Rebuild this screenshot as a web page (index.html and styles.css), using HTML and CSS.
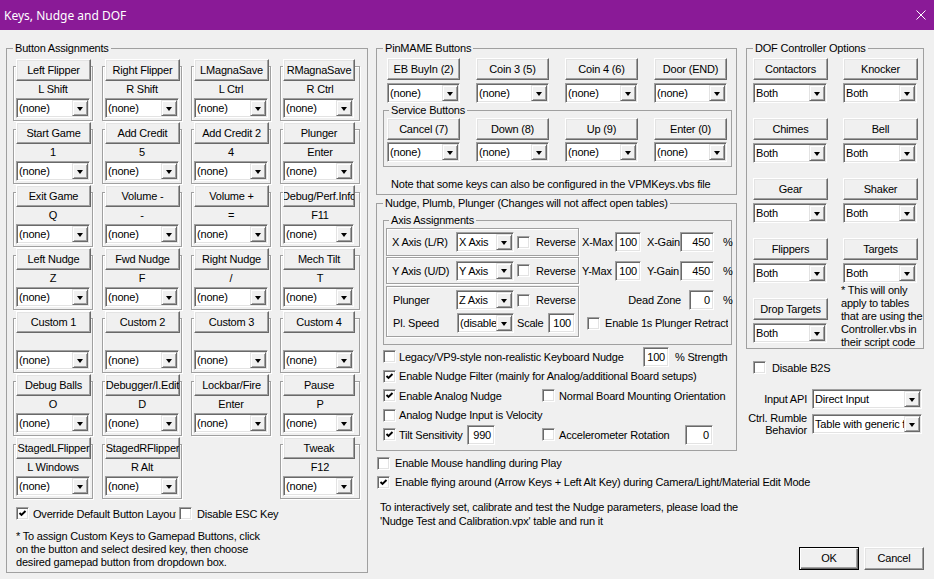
FILE: index.html
```html
<!DOCTYPE html>
<html lang="en">
<head>
    <meta charset="UTF-8">
    <meta name="viewport" content="width=device-width, initial-scale=1.0">
    <title>Keys, Nudge and DOF</title>
    <link rel="stylesheet" href="styles.css">
</head>
<body>
<div class="window">
    <div class="titlebar">
        <span class="title">Keys, Nudge and DOF</span>
        <svg class="close" width="10" height="10" viewBox="0 0 10 10"><path d="M0.5 0.5L9.5 9.5M9.5 0.5L0.5 9.5" stroke="#fff" stroke-width="1" fill="none"/></svg>
    </div>

    <div class="content">
        <!-- left: key assignments -->
        <div class="col">
            <fieldset class="group keys">
                <legend>Button Assignments</legend>
                <div class="key-grid">
                    <div class="key"><button class="btn">Left Flipper</button><div class="key-name">L Shift</div><div class="combo"><span class="val">(none)</span><span class="arr"></span></div></div>
                    <div class="key"><button class="btn">Right Flipper</button><div class="key-name">R Shift</div><div class="combo"><span class="val">(none)</span><span class="arr"></span></div></div>
                    <div class="key"><button class="btn">LMagnaSave</button><div class="key-name">L Ctrl</div><div class="combo"><span class="val">(none)</span><span class="arr"></span></div></div>
                    <div class="key k4"><button class="btn">RMagnaSave</button><div class="key-name">R Ctrl</div><div class="combo"><span class="val">(none)</span><span class="arr"></span></div></div>

                    <div class="key"><button class="btn">Start Game</button><div class="key-name">1</div><div class="combo"><span class="val">(none)</span><span class="arr"></span></div></div>
                    <div class="key"><button class="btn">Add Credit</button><div class="key-name">5</div><div class="combo"><span class="val">(none)</span><span class="arr"></span></div></div>
                    <div class="key"><button class="btn">Add Credit 2</button><div class="key-name">4</div><div class="combo"><span class="val">(none)</span><span class="arr"></span></div></div>
                    <div class="key k4"><button class="btn">Plunger</button><div class="key-name">Enter</div><div class="combo"><span class="val">(none)</span><span class="arr"></span></div></div>

                    <div class="key"><button class="btn">Exit Game</button><div class="key-name">Q</div><div class="combo"><span class="val">(none)</span><span class="arr"></span></div></div>
                    <div class="key"><button class="btn">Volume -</button><div class="key-name">-</div><div class="combo"><span class="val">(none)</span><span class="arr"></span></div></div>
                    <div class="key"><button class="btn">Volume +</button><div class="key-name">=</div><div class="combo"><span class="val">(none)</span><span class="arr"></span></div></div>
                    <div class="key k4"><button class="btn">Debug/Perf.Info</button><div class="key-name">F11</div><div class="combo"><span class="val">(none)</span><span class="arr"></span></div></div>

                    <div class="key"><button class="btn">Left Nudge</button><div class="key-name">Z</div><div class="combo"><span class="val">(none)</span><span class="arr"></span></div></div>
                    <div class="key"><button class="btn">Fwd Nudge</button><div class="key-name">F</div><div class="combo"><span class="val">(none)</span><span class="arr"></span></div></div>
                    <div class="key"><button class="btn">Right Nudge</button><div class="key-name">/</div><div class="combo"><span class="val">(none)</span><span class="arr"></span></div></div>
                    <div class="key k4"><button class="btn">Mech Tilt</button><div class="key-name">T</div><div class="combo"><span class="val">(none)</span><span class="arr"></span></div></div>

                    <div class="key"><button class="btn">Custom 1</button><div class="key-name"></div><div class="combo"><span class="val">(none)</span><span class="arr"></span></div></div>
                    <div class="key"><button class="btn">Custom 2</button><div class="key-name"></div><div class="combo"><span class="val">(none)</span><span class="arr"></span></div></div>
                    <div class="key"><button class="btn">Custom 3</button><div class="key-name"></div><div class="combo"><span class="val">(none)</span><span class="arr"></span></div></div>
                    <div class="key k4"><button class="btn">Custom 4</button><div class="key-name"></div><div class="combo"><span class="val">(none)</span><span class="arr"></span></div></div>

                    <div class="key"><button class="btn">Debug Balls</button><div class="key-name">O</div><div class="combo"><span class="val">(none)</span><span class="arr"></span></div></div>
                    <div class="key"><button class="btn">Debugger/I.Edit</button><div class="key-name">D</div><div class="combo"><span class="val">(none)</span><span class="arr"></span></div></div>
                    <div class="key"><button class="btn">Lockbar/Fire</button><div class="key-name">Enter</div><div class="combo"><span class="val">(none)</span><span class="arr"></span></div></div>
                    <div class="key k4"><button class="btn">Pause</button><div class="key-name">P</div><div class="combo"><span class="val">(none)</span><span class="arr"></span></div></div>

                    <div class="key"><button class="btn">StagedLFlipper</button><div class="key-name">L Windows</div><div class="combo"><span class="val">(none)</span><span class="arr"></span></div></div>
                    <div class="key"><button class="btn">StagedRFlipper</button><div class="key-name">R Alt</div><div class="combo"><span class="val">(none)</span><span class="arr"></span></div></div>
                    <div class="key k4 tweak"><button class="btn">Tweak</button><div class="key-name">F12</div><div class="combo"><span class="val">(none)</span><span class="arr"></span></div></div>
                </div>

                <div class="key-opts">
                    <label class="chk override"><span class="cb on"><svg viewBox="0 0 9 9"><polyline points="1.5,4 3.5,6 7.5,2"/></svg></span><span class="txt">Override Default Button Layout</span></label>
                    <label class="chk esc"><span class="cb"></span><span class="txt">Disable ESC Key</span></label>
                </div>
                <p class="key-note">* To assign Custom Keys to Gamepad Buttons, click<br>on the button and select desired key, then choose<br>desired gamepad button from dropdown box.</p>
            </fieldset>
        </div>

        <!-- middle: pinmame + nudge -->
        <div class="col">
            <fieldset class="group pinmame">
                <legend>PinMAME Buttons</legend>
                <div class="pm-grid">
                    <div><button class="btn">EB BuyIn (2)</button><div class="combo"><span class="val">(none)</span><span class="arr"></span></div></div>
                    <div><button class="btn">Coin 3 (5)</button><div class="combo"><span class="val">(none)</span><span class="arr"></span></div></div>
                    <div><button class="btn">Coin 4 (6)</button><div class="combo"><span class="val">(none)</span><span class="arr"></span></div></div>
                    <div><button class="btn">Door (END)</button><div class="combo"><span class="val">(none)</span><span class="arr"></span></div></div>
                </div>
                <fieldset class="group service">
                    <legend>Service Buttons</legend>
                    <div class="pm-grid">
                        <div><button class="btn">Cancel (7)</button><div class="combo"><span class="val">(none)</span><span class="arr"></span></div></div>
                        <div><button class="btn">Down (8)</button><div class="combo"><span class="val">(none)</span><span class="arr"></span></div></div>
                        <div><button class="btn">Up (9)</button><div class="combo"><span class="val">(none)</span><span class="arr"></span></div></div>
                        <div><button class="btn">Enter (0)</button><div class="combo"><span class="val">(none)</span><span class="arr"></span></div></div>
                    </div>
                </fieldset>
                <p class="pm-note">Note that some keys can also be configured in the VPMKeys.vbs file</p>
            </fieldset>

            <fieldset class="group nudge">
                <legend>Nudge, Plumb, Plunger (Changes will not affect open tables)</legend>
                <fieldset class="group axis">
                    <legend>Axis Assignments</legend>
                    <div class="axis-row">
                        <div class="axis-box">
                            <span class="axis-label">X Axis (L/R)</span>
                            <div class="combo axis-combo"><span class="val">X Axis</span><span class="arr"></span></div>
                            <span class="cb"></span><span class="rev">Reverse</span>
                        </div>
                        <div class="axis-side">
                            <span class="max-label">X-Max</span><span class="field max-field">100</span>
                            <span class="gain-label">X-Gain</span><span class="field gain-field">450</span>
                            <span class="pct">%</span>
                        </div>
                    </div>
                    <div class="axis-row axis-y">
                        <div class="axis-box">
                            <span class="axis-label">Y Axis (U/D)</span>
                            <div class="combo axis-combo"><span class="val">Y Axis</span><span class="arr"></span></div>
                            <span class="cb"></span><span class="rev">Reverse</span>
                        </div>
                        <div class="axis-side">
                            <span class="max-label">Y-Max</span><span class="field max-field">100</span>
                            <span class="gain-label">Y-Gain</span><span class="field gain-field">450</span>
                            <span class="pct">%</span>
                        </div>
                    </div>
                    <div class="axis-row plunger">
                        <div class="axis-box">
                            <div class="line">
                                <span class="axis-label">Plunger</span>
                                <div class="combo axis-combo"><span class="val">Z Axis</span><span class="arr"></span></div>
                                <span class="cb"></span><span class="rev">Reverse</span>
                            </div>
                            <div class="line">
                                <span class="axis-label speed">Pl. Speed</span>
                                <div class="combo speed-combo"><span class="val">(disabled)</span><span class="arr"></span></div>
                                <span class="scale">Scale</span><span class="field scale-field">100</span>
                            </div>
                        </div>
                        <div class="axis-side">
                            <div class="line">
                                <span class="dz-label">Dead Zone</span><span class="field dz-field">0</span><span class="pct">%</span>
                            </div>
                            <div class="line">
                                <span class="cb"></span><span class="retract">Enable 1s Plunger Retract</span>
                            </div>
                        </div>
                    </div>
                </fieldset>

                <div class="nudge-opts">
                    <div class="opt-line">
                        <label class="chk w260"><span class="cb"></span><span class="txt">Legacy/VP9-style non-realistic Keyboard Nudge</span></label>
                        <span class="field strength-field">100</span><span class="strength">% Strength</span>
                    </div>
                    <div class="opt-line">
                        <label class="chk"><span class="cb on"><svg viewBox="0 0 9 9"><polyline points="1.5,4 3.5,6 7.5,2"/></svg></span><span class="txt">Enable Nudge Filter (mainly for Analog/additional Board setups)</span></label>
                    </div>
                    <div class="opt-line">
                        <label class="chk w159"><span class="cb on"><svg viewBox="0 0 9 9"><polyline points="1.5,4 3.5,6 7.5,2"/></svg></span><span class="txt">Enable Analog Nudge</span></label>
                        <label class="chk chk2"><span class="cb"></span><span class="txt">Normal Board Mounting Orientation</span></label>
                    </div>
                    <div class="opt-line">
                        <label class="chk"><span class="cb"></span><span class="txt">Analog Nudge Input is Velocity</span></label>
                    </div>
                    <div class="opt-line">
                        <div class="w159 opt-part">
                            <label class="chk"><span class="cb on"><svg viewBox="0 0 9 9"><polyline points="1.5,4 3.5,6 7.5,2"/></svg></span><span class="txt tilt-txt">Tilt Sensitivity</span></label>
                            <span class="field tilt-field">990</span>
                        </div>
                        <label class="chk chk2 w143"><span class="cb"></span><span class="txt">Accelerometer Rotation</span></label>
                        <span class="field rot-field">0</span>
                    </div>
                </div>
            </fieldset>

            <label class="chk play-line first"><span class="cb"></span><span class="txt">Enable Mouse handling during Play</span></label>
            <label class="chk play-line"><span class="cb on"><svg viewBox="0 0 9 9"><polyline points="1.5,4 3.5,6 7.5,2"/></svg></span><span class="txt">Enable flying around (Arrow Keys + Left Alt Key) during Camera/Light/Material Edit Mode</span></label>
            <p class="mid-note">To interactively set, calibrate and test the Nudge parameters, please load the<br>'Nudge Test and Calibration.vpx' table and run it</p>
        </div>

        <!-- right: DOF and dialog buttons -->
        <div class="col">
            <fieldset class="group dof">
                <legend>DOF Controller Options</legend>
                <div class="dof-cols">
                    <div class="dof-col">
                        <div class="dof-item"><button class="btn">Contactors</button><div class="combo"><span class="val">Both</span><span class="arr"></span></div></div>
                        <div class="dof-item"><button class="btn">Chimes</button><div class="combo"><span class="val">Both</span><span class="arr"></span></div></div>
                        <div class="dof-item"><button class="btn">Gear</button><div class="combo"><span class="val">Both</span><span class="arr"></span></div></div>
                        <div class="dof-item"><button class="btn">Flippers</button><div class="combo"><span class="val">Both</span><span class="arr"></span></div></div>
                        <div class="dof-item"><button class="btn">Drop Targets</button><div class="combo"><span class="val">Both</span><span class="arr"></span></div></div>
                    </div>
                    <div class="dof-col">
                        <div class="dof-item"><button class="btn">Knocker</button><div class="combo"><span class="val">Both</span><span class="arr"></span></div></div>
                        <div class="dof-item"><button class="btn">Bell</button><div class="combo"><span class="val">Both</span><span class="arr"></span></div></div>
                        <div class="dof-item"><button class="btn">Shaker</button><div class="combo"><span class="val">Both</span><span class="arr"></span></div></div>
                        <div class="dof-item"><button class="btn">Targets</button><div class="combo"><span class="val">Both</span><span class="arr"></span></div></div>
                        <p class="dof-note">* This will only<br>apply to tables<br>that are using the<br>Controller.vbs in<br>their script code</p>
                    </div>
                </div>
            </fieldset>

            <label class="chk b2s"><span class="cb"></span><span class="txt">Disable B2S</span></label>

            <div class="api-row">
                <span class="api-label">Input API</span>
                <div class="combo"><span class="val">Direct Input</span><span class="arr"></span></div>
            </div>
            <div class="api-row rumble">
                <span class="api-label">Ctrl. Rumble<br>Behavior</span>
                <div class="combo"><span class="val">Table with generic feedback</span><span class="arr"></span></div>
            </div>

            <div class="dialog-buttons">
                <button class="btn default">OK</button>
                <button class="btn">Cancel</button>
            </div>
        </div>
    </div>
</div>
</body>
</html>
```

FILE: styles.css
```css
* {
    box-sizing: border-box;
}

body {
    margin: 0;
    background: #f0f0f0;
    font-family: "Liberation Sans", Arial, sans-serif;
    font-size: 11px;
    letter-spacing: -0.2px;
    color: #000;
}

p {
    margin: 0;
}

.window {
    width: 934px;
    height: 579px;
    overflow: hidden;
}

/* title bar */
.titlebar {
    height: 30px;
    background: #8a1a97;
    color: #fff;
    display: flex;
    align-items: center;
    justify-content: space-between;
    padding: 0 8px 0 4px;
    font-family: "Noto Sans", sans-serif;
    font-size: 12px;
    letter-spacing: 0;
}

.content {
    display: grid;
    grid-template-columns: 370px 370px 178px;
    padding: 12px 0 0 6px;
}

.col {
    display: flex;
    flex-direction: column;
    align-items: flex-start;
}

/* group boxes */
.group {
    margin: 0;
    padding: 0;
    border: 1px solid #a0a0a0;
    min-width: 0;
}

.group > legend {
    padding: 0 2px;
    line-height: 13px;
}

/* classic controls */
.btn {
    display: flex;
    justify-content: center;
    align-items: center;
    height: 22px;
    padding: 0;
    border: 1px solid;
    border-color: #fff #696969 #696969 #fff;
    box-shadow: inset -1px -1px #a0a0a0, inset 1px 1px #e3e3e3;
    background: #f0f0f0;
    font: inherit;
    letter-spacing: inherit;
    color: #000;
    line-height: 20px;
    white-space: nowrap;
    overflow: hidden;
}

.combo {
    display: flex;
    height: 20px;
    padding: 1px;
    background: #fff;
    border: 1px solid;
    border-color: #a0a0a0 #fff #fff #a0a0a0;
    box-shadow: inset 1px 1px #696969, inset -1px -1px #e3e3e3;
}

.combo .val {
    flex: 1;
    min-width: 0;
    padding-left: 1px;
    line-height: 16px;
    white-space: nowrap;
    overflow: hidden;
}

.combo .arr {
    flex: none;
    width: 16px;
    height: 16px;
    display: flex;
    align-items: center;
    justify-content: center;
    background: #f0f0f0;
    border: 1px solid;
    border-color: #e3e3e3 #696969 #696969 #e3e3e3;
    box-shadow: inset 1px 1px #fff, inset -1px -1px #a0a0a0;
}

.combo .arr::after {
    content: "";
    border-style: solid;
    border-width: 4px 3.5px 0 3.5px;
    border-color: #000 transparent transparent transparent;
    margin-top: 1px;
}

.field {
    display: block;
    height: 20px;
    padding: 1px 3px 1px 1px;
    background: #fff;
    border: 1px solid;
    border-color: #a0a0a0 #fff #fff #a0a0a0;
    box-shadow: inset 1px 1px #696969, inset -1px -1px #e3e3e3;
    text-align: right;
    line-height: 17px;
}

.cb {
    flex: none;
    width: 13px;
    height: 13px;
    display: flex;
    align-items: center;
    justify-content: center;
    background: #fff;
    border: 1px solid;
    border-color: #a0a0a0 #fff #fff #a0a0a0;
    box-shadow: inset 1px 1px #696969, inset -1px -1px #e3e3e3;
}

.cb svg {
    width: 9px;
    height: 9px;
}

.cb polyline {
    fill: none;
    stroke: #000;
    stroke-width: 1.9;
}

.chk {
    display: flex;
    align-items: center;
    white-space: nowrap;
}

.chk .txt {
    margin-left: 3px;
}

/* button assignments */
.keys {
    width: 362px;
    padding: 11px 0 3px 6px;
}

.key-grid {
    display: grid;
    grid-template-columns: repeat(4, 80px);
    column-gap: 9px;
    row-gap: 8px;
}

.key {
    height: 55px;
    border: 1px solid #a0a0a0;
    box-shadow: inset 1px 1px #fff, 1px 1px #fff;
}

.key .btn {
    width: 75px;
    margin: -8px 0 0 2px;
}

.key .combo {
    width: 74px;
    margin-left: 2px;
}

.key.k4 .btn {
    width: 72px;
}

.key.k4 .combo {
    width: 71px;
}

.key.tweak {
    grid-column: 4;
}

.key-name {
    height: 13px;
    line-height: 13px;
    margin: 2px 0;
    text-align: center;
}

.key-opts {
    display: flex;
    height: 13px;
    margin-top: 8px;
}

.override .cb {
    margin-left: 3px;
}

.override .txt {
    margin-left: 4px;
    width: 143px;
    overflow: hidden;
}

.esc .cb {
    margin-left: 3px;
}

.esc .txt {
    margin-left: 5px;
}

.key-note {
    margin: 10px 0 0 3px;
    line-height: 13px;
}

/* pinmame */
.pinmame {
    width: 361px;
    padding: 3px 0 3px 6px;
}

.pm-grid {
    display: grid;
    grid-template-columns: repeat(4, 73px);
    column-gap: 16px;
    margin-left: 4px;
}

.pm-grid .btn,
.pm-grid .combo {
    width: 100%;
}

.pm-grid .combo {
    margin-top: 3px;
}

.service {
    width: 349px;
    margin-top: 1px;
    padding: 1px 0 4px 3px;
}

.service > legend {
    margin-left: 2px;
}

.service .pm-grid {
    margin-left: 0;
}

.service .pm-grid .combo {
    margin-top: 2px;
}

.pm-note {
    margin: 11px 0 0 8px;
    line-height: 13px;
}

/* nudge */
.nudge {
    width: 361px;
    margin-top: 2px;
    padding: 4px 0 5px 6px;
}

.axis {
    width: 349px;
    padding: 1px 0 7px 2px;
}

.axis > legend {
    margin-left: 3px;
}

.axis-row {
    display: flex;
}

.axis-y {
    margin-top: 1px;
}

.axis-box {
    flex: none;
    width: 193px;
    height: 28px;
    display: flex;
    align-items: center;
    padding-left: 5px;
    border: 1px solid #a0a0a0;
    box-shadow: inset 1px 1px #fff, 1px 1px #fff;
}

.axis-y .axis-box {
    height: 27px;
}

.axis-label {
    width: 64px;
    white-space: nowrap;
}

.axis-combo {
    width: 58px;
}

.axis-box .cb {
    margin-left: 3px;
}

.rev {
    margin-left: 6px;
}

.axis-side {
    display: flex;
    align-items: center;
    padding-left: 3px;
    white-space: nowrap;
}

.max-label {
    width: 33px;
}

.max-field {
    width: 26px;
}

.gain-label {
    width: 33px;
    margin-left: 6px;
}

.gain-field {
    width: 34px;
}

.pct {
    margin-left: 9px;
}

.plunger {
    margin-top: 2px;
}

.plunger .axis-box {
    height: 51px;
    flex-direction: column;
    align-items: flex-start;
    padding: 3px 0 0 6px;
}

.line {
    display: flex;
    align-items: center;
    height: 20px;
}

.line + .line {
    margin-top: 3px;
}

.plunger .axis-label {
    width: 63px;
}

.plunger .axis-label.speed {
    width: 64px;
}

.speed-combo {
    width: 57px;
}

.scale {
    width: 31px;
    margin-left: 3px;
}

.scale-field {
    width: 27px;
}

.plunger .axis-side {
    flex-direction: column;
    align-items: flex-start;
    padding: 4px 0 0 0;
}

.dz-label {
    width: 102px;
    text-align: right;
}

.dz-field {
    width: 25px;
    margin-left: 8px;
}

.axis-side .cb {
    margin-left: 8px;
}

.retract {
    width: 123px;
    margin-left: 5px;
    white-space: nowrap;
    overflow: hidden;
}

.nudge-opts {
    margin-top: 2px;
}

.opt-line {
    display: flex;
    align-items: center;
    height: 19.5px;
}

.opt-part {
    display: flex;
    align-items: center;
}

.w260 {
    width: 260px;
}

.w159 {
    width: 159px;
}

.w143 {
    width: 143px;
}

.chk2 .txt {
    margin-left: 4px;
}

.strength-field {
    width: 26px;
}

.strength {
    margin-left: 6px;
}

.tilt-txt {
    width: 65px;
}

.tilt-field {
    width: 28px;
    margin-left: 3px;
}

.rot-field {
    width: 28px;
}

.play-line {
    height: 19px;
    margin-left: 1px;
}

.play-line.first {
    margin-top: 3px;
}

.play-line .txt {
    margin-left: 5px;
}

.mid-note {
    margin: 8px 0 0 4px;
    line-height: 14px;
    white-space: nowrap;
}

/* dof */
.dof {
    width: 178px;
    height: 307px;
    padding: 3px 0 0 6px;
}

.dof-cols {
    display: flex;
    gap: 15px;
}

.dof-col {
    width: 75px;
}

.dof-item {
    margin-bottom: 15px;
}

.dof-item .btn {
    width: 75px;
}

.dof-item .combo {
    width: 74px;
    margin-top: 3px;
}

.dof-note {
    margin: -14px 0 0 -2px;
    line-height: 13px;
    white-space: nowrap;
}

.b2s {
    height: 13px;
    margin: 12px 0 0 7px;
}

.b2s .txt {
    margin-left: 6px;
}

.api-row {
    display: flex;
    align-items: center;
    margin-top: 15px;
}

.api-label {
    width: 61px;
    text-align: right;
}

.api-row .combo {
    width: 110px;
    margin-left: 5px;
}

.rumble {
    margin-top: 3px;
}

.rumble .api-label {
    line-height: 12px;
}

.dialog-buttons {
    align-self: stretch;
    display: flex;
    justify-content: flex-end;
    gap: 5px;
    margin-top: auto;
    margin-bottom: 3px;
}

.dialog-buttons .btn {
    width: 60px;
    height: 23px;
    line-height: 21px;
}

.btn.default {
    border-color: #000;
    box-shadow: inset 1px 1px #fff, inset -1px -1px #696969, inset -2px -2px #a0a0a0;
}
```
